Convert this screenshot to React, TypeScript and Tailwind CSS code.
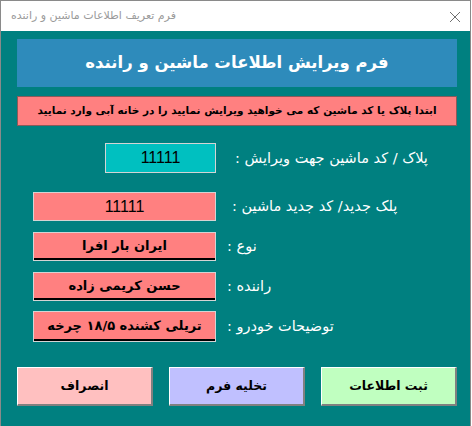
import React from 'react'

const fa = "font-['DejaVu_Sans',sans-serif]"

function Field({ value, wide = true, color = 'bg-[#ff8080]', underline = false, bold = false, latin = false }: {
  value: string
  wide?: boolean
  color?: string
  underline?: boolean
  bold?: boolean
  latin?: boolean
}) {
  return (
    <div
      className={`${wide ? 'w-[183px] ml-[16px]' : 'w-[111px] ml-[88px]'} h-full ${color} border border-[#d4d4d4] flex flex-col shrink-0`}
    >
      <div
        dir="rtl"
        className={`flex-1 flex items-center justify-center text-black ${latin ? "font-['Liberation_Sans',sans-serif] text-[16px]" : `${fa} text-[13px]`} ${bold ? 'font-bold' : ''}`}
      >
        {value}
      </div>
      {underline && <div className="h-[2px] bg-black" />}
    </div>
  )
}

function Row({ label, children, h, gap }: { label: string; children: React.ReactNode; h: string; gap: string }) {
  return (
    <div className={`flex items-center ${h}`}>
      {children}
      <div dir="rtl" className={`${gap} text-white text-[14.5px] ${fa} text-left leading-none`}>
        {label}
      </div>
    </div>
  )
}

function Btn({ label, color }: { label: string; color: string }) {
  return (
    <button
      className={`w-[136px] h-[39px] ${color} border-t border-l border-white border-b-2 border-r-2 border-b-[#808080] border-r-[#808080] ${fa} font-bold text-[12.5px] text-black flex items-center justify-center`}
      dir="rtl"
    >
      {label}
    </button>
  )
}

export default function App() {
  return (
    <div className="w-[472px] h-[426px] bg-white overflow-hidden">
      <div className="w-[471px] h-[426px] border-t border-l border-r border-[#8a8a8a] flex flex-col">
        <div className="h-[30px] bg-white flex items-center justify-between pl-[10px] pr-[9px]">
          <span dir="rtl" className={`${fa} text-[11px] text-[#9a9a9a]`}>فرم تعریف اطلاعات ماشین و راننده</span>
          <svg width="12" height="12" viewBox="0 0 12 12" className="mt-[1px]">
            <path d="M1 1 L11 11 M11 1 L1 11" stroke="#707070" strokeWidth="1" />
          </svg>
        </div>
        <div className="flex-1 bg-[#008080] pl-[16px] pr-[13px] pt-[8px] flex flex-col">
          <div className="h-[48px] bg-[#2e8bbb] flex items-center justify-center">
            <span dir="rtl" className={`${fa} font-bold text-[16.5px] text-white`}>فرم ویرایش اطلاعات ماشین و راننده</span>
          </div>
          <div className="mt-[9px] h-[30px] bg-[#ff8080] border border-[#8a5a5a] flex items-center justify-center">
            <span dir="rtl" className={`${fa} font-bold text-[10.5px] text-black whitespace-nowrap`}>ابتدا پلاک یا کد ماشین که می خواهید ویرایش نمایید را در خانه آبی وارد نمایید</span>
          </div>

          <div className="mt-[17px]">
            <Row label="پلاک / کد ماشین جهت ویرایش :" h="h-[30px]" gap="ml-[19px]">
              <Field value="11111" wide={false} color="bg-[#00c0c0]" latin />
            </Row>
          </div>
          <div className="mt-[19px]">
            <Row label="پلک جدید/ کد جدید ماشین :" h="h-[29px]" gap="ml-[16px]">
              <Field value="11111" latin />
            </Row>
          </div>
          <div className="mt-[11px]">
            <Row label="نوع :" h="h-[29px]" gap="ml-[11px]">
              <Field value="ایران بار افرا" underline bold />
            </Row>
          </div>
          <div className="mt-[11px]">
            <Row label="راننده :" h="h-[29px]" gap="ml-[11px]">
              <Field value="حسن کریمی زاده" underline bold />
            </Row>
          </div>
          <div className="mt-[10px]">
            <Row label="توضیحات خودرو :" h="h-[31px]" gap="ml-[11px]">
              <Field value="تریلی کشنده ۱۸/۵ چرخه" underline bold />
            </Row>
          </div>

          <div className="mt-[25px] flex justify-between">
            <Btn label="انصراف" color="bg-[#ffc0c0]" />
            <Btn label="تخلیه فرم" color="bg-[#c0c0ff]" />
            <Btn label="ثبت اطلاعات" color="bg-[#c0ffc0]" />
          </div>
        </div>
      </div>
    </div>
  )
}
